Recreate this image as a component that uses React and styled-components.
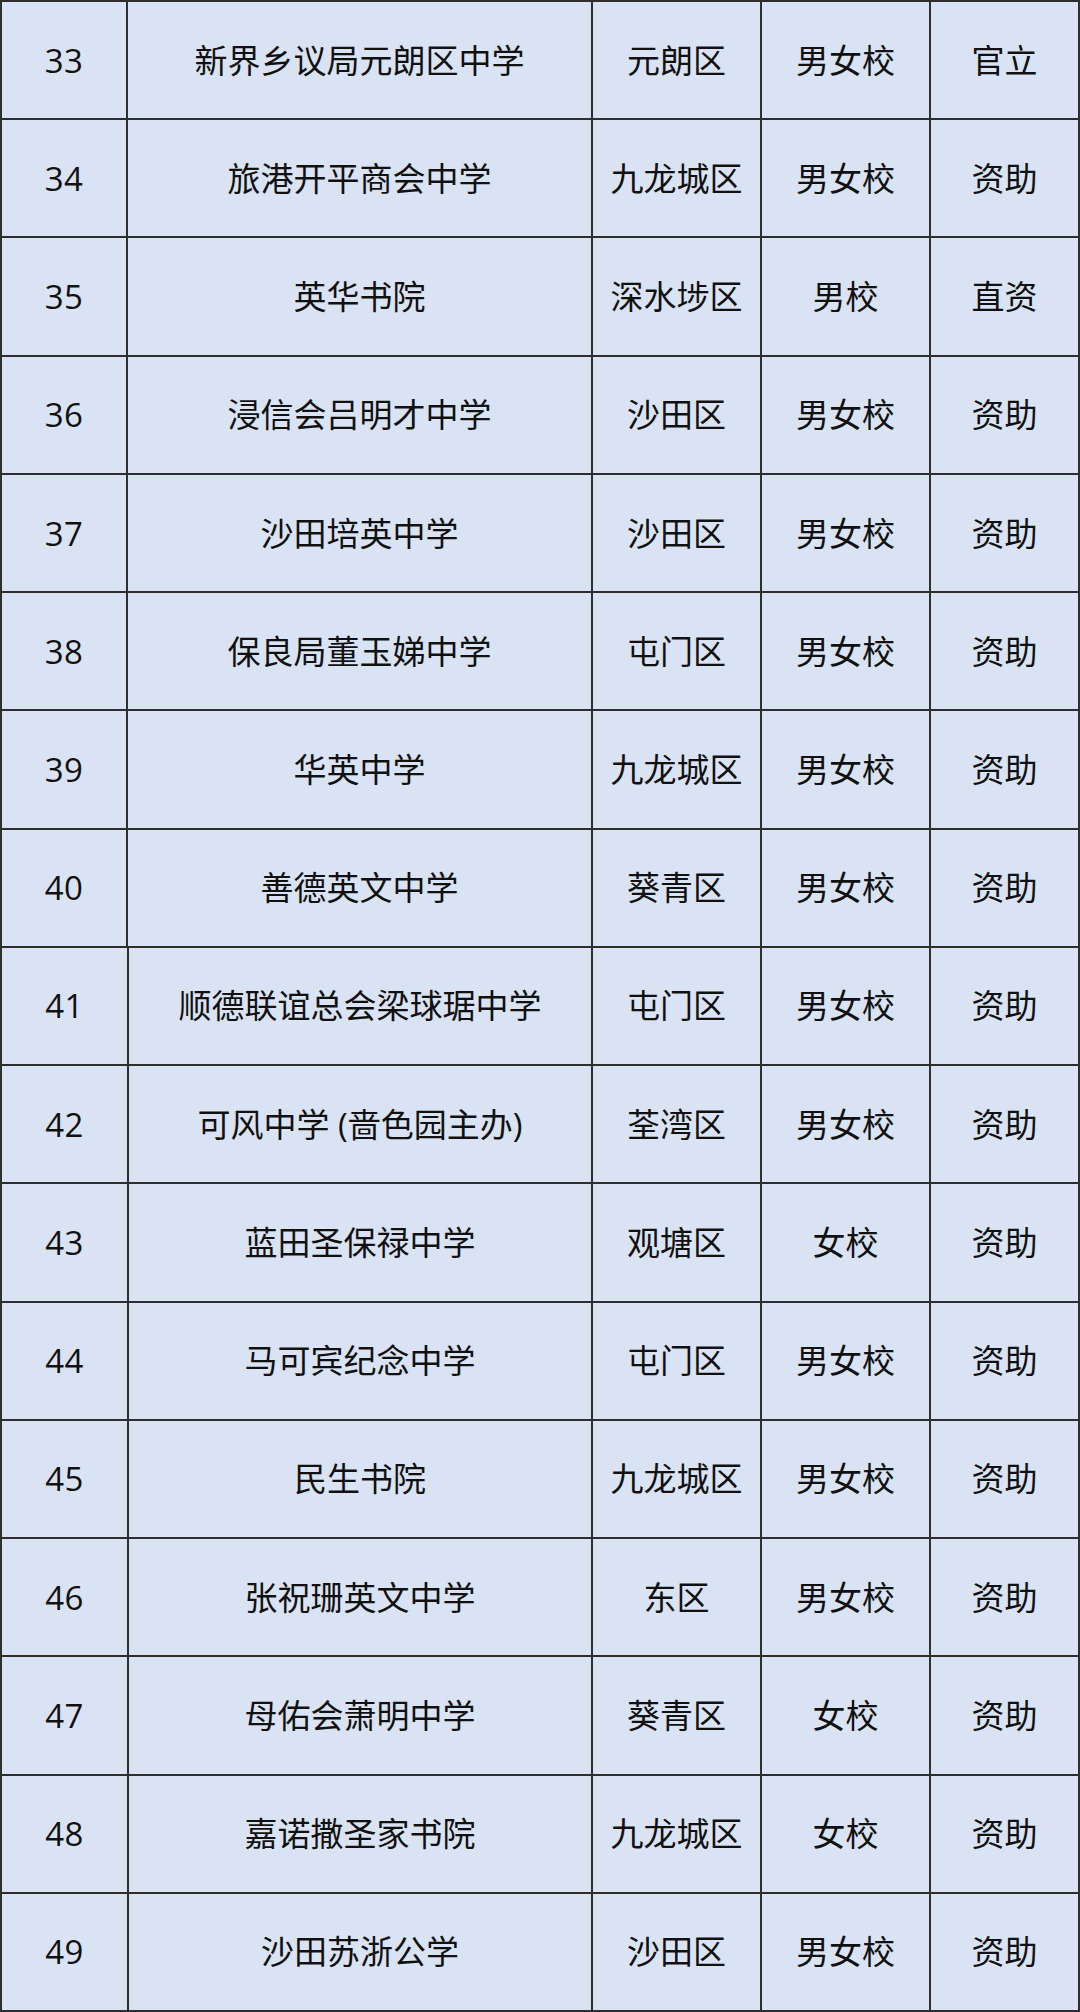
import React from "react";
import styled, { createGlobalStyle } from "styled-components";

const GlobalStyle = createGlobalStyle`
  html, body {
    margin: 0;
    padding: 0;
    background: #dae3f3;
  }
  body {
    font-family: "Open Sans", "Noto Sans CJK SC", sans-serif;
  }
`;

const schools = [
  [33, "新界乡议局元朗区中学", "元朗区", "男女校", "官立"],
  [34, "旅港开平商会中学", "九龙城区", "男女校", "资助"],
  [35, "英华书院", "深水埗区", "男校", "直资"],
  [36, "浸信会吕明才中学", "沙田区", "男女校", "资助"],
  [37, "沙田培英中学", "沙田区", "男女校", "资助"],
  [38, "保良局董玉娣中学", "屯门区", "男女校", "资助"],
  [39, "华英中学", "九龙城区", "男女校", "资助"],
  [40, "善德英文中学", "葵青区", "男女校", "资助"],
  [41, "顺德联谊总会梁球琚中学", "屯门区", "男女校", "资助"],
  [42, "可风中学 (啬色园主办)", "荃湾区", "男女校", "资助"],
  [43, "蓝田圣保禄中学", "观塘区", "女校", "资助"],
  [44, "马可宾纪念中学", "屯门区", "男女校", "资助"],
  [45, "民生书院", "九龙城区", "男女校", "资助"],
  [46, "张祝珊英文中学", "东区", "男女校", "资助"],
  [47, "母佑会萧明中学", "葵青区", "女校", "资助"],
  [48, "嘉诺撒圣家书院", "九龙城区", "女校", "资助"],
  [49, "沙田苏浙公学", "沙田区", "男女校", "资助"],
];

// 표 전체
const Table = styled.div`
  display: grid;
  grid-template-rows: repeat(17, 1fr);
  width: 1080px;
  height: 2012px;
  box-sizing: border-box;
  border-top: 2px solid #2e2e2e;
  border-left: 2px solid #2e2e2e;
  background: #dae3f3;
`;

// 한 줄 (아래쪽 절반은 첫 칸이 살짝 넓음)
const Row = styled.div`
  display: grid;
  grid-template-columns: ${(p) => (p.$shift ? "127px 464px" : "126px 465px")} 169px 169px 1fr;
  min-height: 0;
`;

const Cell = styled.div`
  display: flex;
  align-items: center;
  justify-content: center;
  box-sizing: border-box;
  border-right: 2px solid #2e2e2e;
  border-bottom: 2px solid #2e2e2e;
  color: #111;
  font-size: 33px;
  line-height: 1;
  white-space: nowrap;
  letter-spacing: ${(p) => (p.$num ? "0.5px" : "0")};
`;

const App = () => {
  return (
    <>
      <GlobalStyle />
      <Table>
        {schools.map(([no, name, area, kind, type], i) => (
          <Row key={no} $shift={i >= 8}>
            <Cell $num>{no}</Cell>
            <Cell>{name}</Cell>
            <Cell>{area}</Cell>
            <Cell>{kind}</Cell>
            <Cell>{type}</Cell>
          </Row>
        ))}
      </Table>
    </>
  );
};

export default App;
